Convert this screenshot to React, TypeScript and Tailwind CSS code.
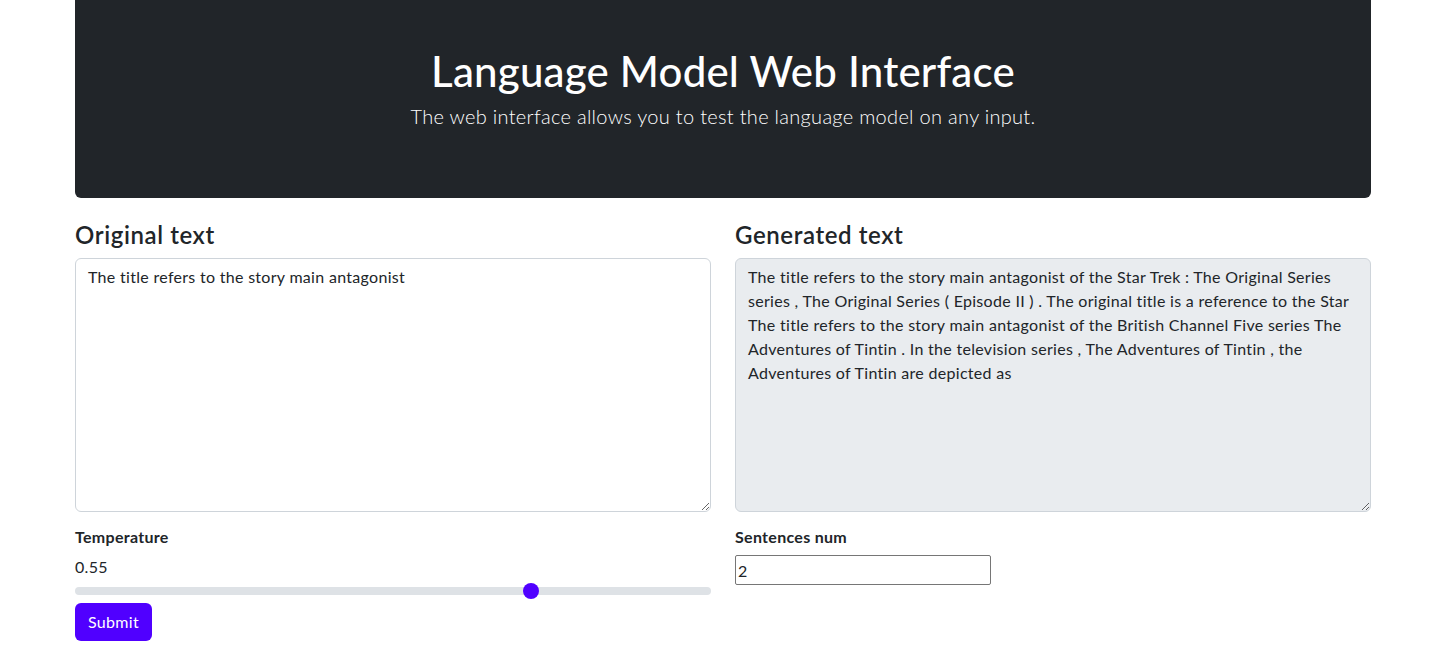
import { useState } from "react";

const generated =
  "The title refers to the story main antagonist of the Star Trek : The Original Series\nseries , The Original Series ( Episode II ) . The original title is a reference to the Star\nThe title refers to the story main antagonist of the British Channel Five series The\nAdventures of Tintin . In the television series , The Adventures of Tintin , the\nAdventures of Tintin are depicted as";

export default function App() {
  const [original, setOriginal] = useState("The title refers to the story main antagonist");
  const [sentences, setSentences] = useState("2");
  const pos = 0.7225;

  return (
    <div className="min-h-screen bg-white text-[#212529] font-['Lato','Noto_Sans',sans-serif]">
      <div className="ml-[75px] w-[1296px]">
        {/* Hero */}
        <header className="h-[198px] bg-[#212529] rounded-b-md flex flex-col items-center pt-[46px] text-white">
          <h1 className="text-[42px] leading-[50px] font-medium tracking-[0.2px]">Language Model Web Interface</h1>
          <p className="mt-[5px] text-[20px] leading-[30px] font-light tracking-[0.3px]">
            The web interface allows you to test the language model on any input.
          </p>
        </header>

        <div className="grid grid-cols-2 gap-6 mt-[22px]">
          {/* Left column */}
          <div className="flex flex-col">
            <h2 className="text-[24px] leading-[29px] font-semibold tracking-[0.6px] mb-[9px]">Original text</h2>
            <textarea
              value={original}
              onChange={(e) => setOriginal(e.target.value)}
              className="h-[254px] w-full resize-y rounded-md border border-[#ced4da] bg-white px-3 py-[6px] text-[16px] leading-[24px] tracking-[0.3px] outline-none"
            />
            <label className="mt-[13px] text-[16px] leading-[24px] font-bold tracking-[0.3px]">Temperature</label>
            <div className="mt-[6px] text-[16px] leading-[24px] tracking-[0.3px]">0.55</div>
            <div className="relative mt-[8px] h-2 w-full rounded-full bg-[#dee2e6]">
              <span
                className="absolute top-1/2 h-4 w-4 -translate-x-1/2 -translate-y-1/2 rounded-full bg-[#5000ff]"
                style={{ left: `calc(8px + ${pos} * (100% - 16px))` }}
              />
            </div>
            <div className="mt-[8px]">
              <button className="h-[38px] rounded-md bg-[#5000ff] px-[13px] text-[16px] tracking-[0.3px] text-white">
                Submit
              </button>
            </div>
          </div>

          {/* Right column */}
          <div className="flex flex-col">
            <h2 className="text-[24px] leading-[29px] font-semibold tracking-[0.6px] mb-[9px]">Generated text</h2>
            <textarea
              value={generated}
              readOnly
              wrap="off"
              className="h-[254px] w-full resize-y overflow-hidden rounded-md border border-[#ced4da] bg-[#e9ecef] px-3 py-[6px] text-[16px] leading-[24px] tracking-[0.3px] outline-none"
            />
            <label className="mt-[13px] text-[16px] leading-[24px] font-bold tracking-[0.3px]">Sentences num</label>
            <div className="mt-[6px]">
              <input
                value={sentences}
                onChange={(e) => setSentences(e.target.value)}
                className="h-[30px] w-[256px] border border-[#767676] rounded-[2px] px-[2px] text-[16px] outline-none"
              />
            </div>
          </div>
        </div>
      </div>
    </div>
  );
}
